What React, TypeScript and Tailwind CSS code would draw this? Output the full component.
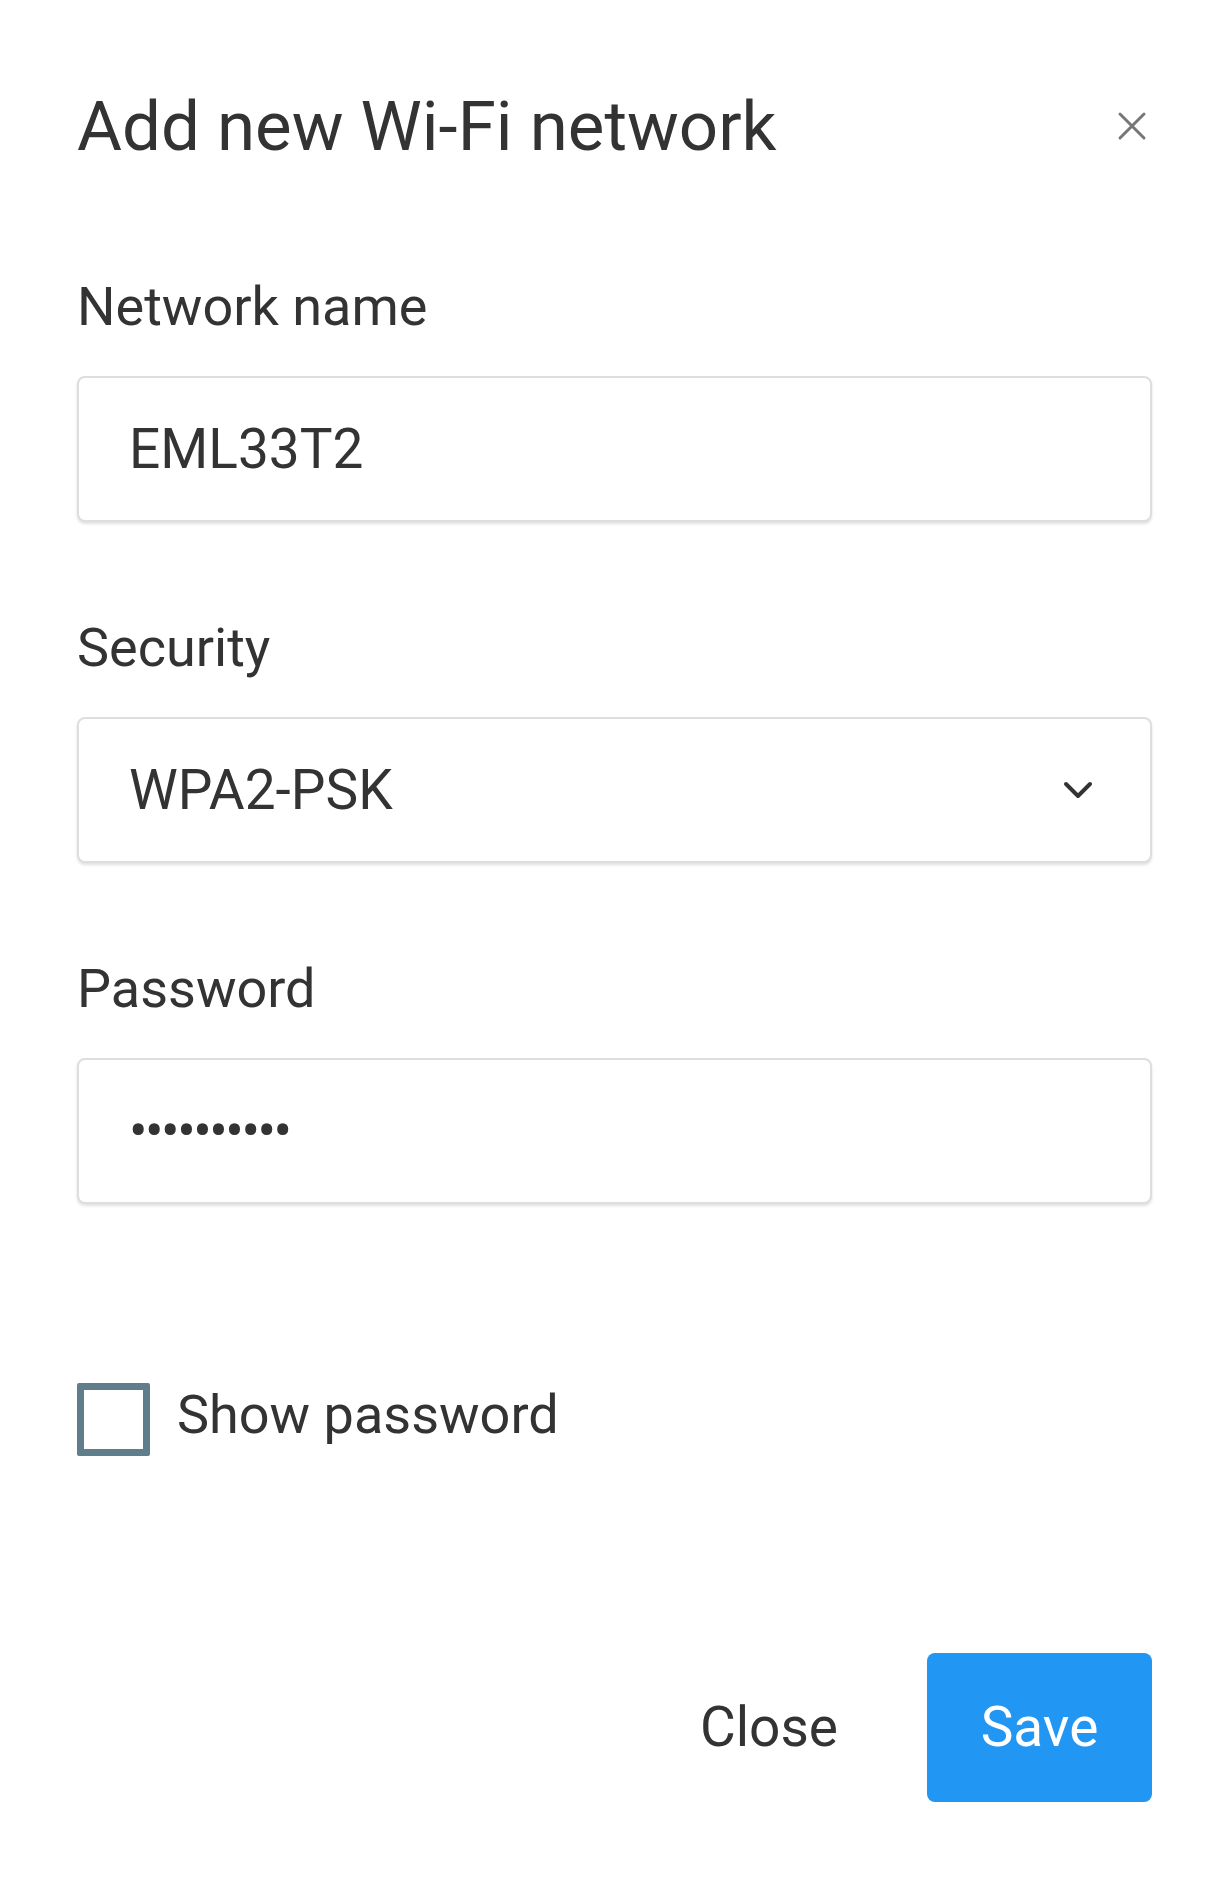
import React, { useState } from 'react';

const Field: React.FC<{ label: string; children: React.ReactNode; className?: string }> = ({ label, children, className }) => (
  <div className={className}>
    <label className="block text-[54px] leading-none text-[#333]">{label}</label>
    <div className="mt-[42px] h-[146px] rounded-lg border-2 border-[#dedede] bg-white shadow-[0_2px_3px_rgba(0,0,0,0.12)] flex items-center pl-[50px] pr-[56px]">
      {children}
    </div>
  </div>
);

const App: React.FC = () => {
  const [showPassword, setShowPassword] = useState(false);

  return (
    <div className="w-[1214px] h-[1877px] bg-white font-['Roboto',sans-serif] pl-[77px] pr-[62px] pt-[91px]">
      {/* Header */}
      <div className="flex items-center justify-between h-[70px]">
        <h1 className="text-[69px] leading-none font-normal text-[#333]">Add new Wi-Fi network</h1>
        <button className="w-[30px] h-[30px] mr-[5px] text-[#777]">
          <svg viewBox="0 0 30 30" className="w-[30px] h-[30px]" fill="none" stroke="currentColor" strokeWidth="3" strokeLinecap="round">
            <path d="M3 3 L27 27 M27 3 L3 27" />
          </svg>
        </button>
      </div>

      <Field label="Network name" className="mt-[119px]">
        <span className="text-[55px] leading-none text-[#333]">EML33T2</span>
      </Field>

      <Field label="Security" className="mt-[99px]">
        <span className="flex-1 text-[55px] leading-none text-[#333]">WPA2-PSK</span>
        <svg viewBox="0 0 32 20" className="w-[32px] h-[20px] text-[#333]" fill="none" stroke="currentColor" strokeWidth="4" strokeLinecap="round" strokeLinejoin="round">
          <path d="M4 4 L16 16 L28 4" />
        </svg>
      </Field>

      <Field label="Password" className="mt-[99px]">
        <span className="text-[55px] leading-none text-[#333] tracking-[-2.5px]">
          {showPassword ? 'password12' : '••••••••••'}
        </span>
      </Field>

      {/* Show password */}
      <label className="mt-[179px] flex items-center cursor-pointer">
        <input
          type="checkbox"
          checked={showPassword}
          onChange={() => setShowPassword(!showPassword)}
          className="sr-only"
        />
        <span className="w-[73px] h-[73px] border-[7px] border-[#607d8b] rounded-[2px] bg-white"></span>
        <span className="ml-[27px] mb-[9px] text-[54px] leading-none text-[#333]">Show password</span>
      </label>

      {/* Actions */}
      <div className="mt-[197px] flex items-center justify-end">
        <button className="text-[55px] leading-none text-[#333] px-[10px] mr-[79px]">Close</button>
        <button className="w-[225px] h-[149px] rounded-lg bg-[#2196f3] text-white text-[55px] leading-none">Save</button>
      </div>
    </div>
  );
};

export default App;
